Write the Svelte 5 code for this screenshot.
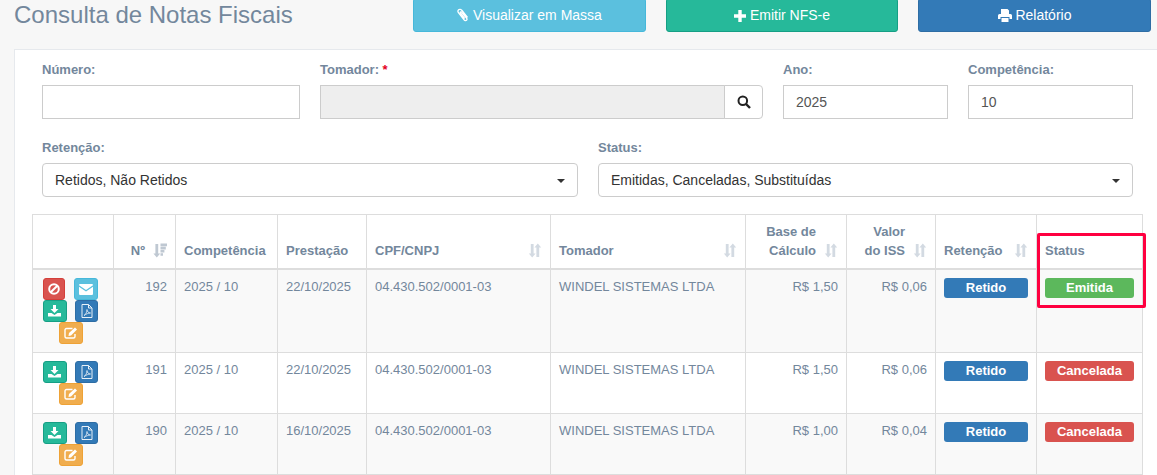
<script>
    let rows = [
        { num: 192, comp: '2025 / 10', prest: '22/10/2025', base: 'R$ 1,50', iss: 'R$ 0,06', status: 'Emitida', open: true },
        { num: 191, comp: '2025 / 10', prest: '22/10/2025', base: 'R$ 1,50', iss: 'R$ 0,06', status: 'Cancelada', open: false },
        { num: 190, comp: '2025 / 10', prest: '16/10/2025', base: 'R$ 1,00', iss: 'R$ 0,04', status: 'Cancelada', open: false }
    ]
</script>

{#snippet sort()}
    <svg class="sort" width="14" height="15" viewBox="0 0 14 15">
        <path d="M2.800 1h2.800v9.500H7.600L4.200 14.500 .8 10.500H2.800z" fill="#d3dae2" />
        <path d="M8.400 14h2.800V4.500h2L9.800 .5 6.400 4.500h2z" fill="#d3dae2" />
    </svg>
{/snippet}

{#snippet download()}
    <svg width="13" height="12" viewBox="0 0 13 12">
        <path d="M5 0h3v4h2.500L6.500 8 2.500 4H5z" fill="#fff" />
        <path d="M0 8h3.500l3 2 3-2H13v3.500H0z" fill="#fff" />
    </svg>
{/snippet}

{#snippet pdf()}
    <svg width="12" height="14" viewBox="0 0 12 14" fill="none" stroke="#e8f0f7" stroke-width="1">
        <path d="M1 .5h6.500L11 4v9.500H1z" />
        <path d="M7.500 .5V4H11" />
        <path d="M3 11.500c2-1 3-4 3-6 0 2 1.500 3.500 3.500 3.500-2 0-4.500 1-6.500 2.500z" stroke-width=".8" />
    </svg>
{/snippet}

{#snippet edit()}
    <svg width="14" height="12" viewBox="0 0 14 12">
        <path d="M8.500 1.500H2.500A1.500 1.500 0 0 0 1 3v6.500A1.500 1.500 0 0 0 2.500 11h7A1.500 1.500 0 0 0 11 9.500V7" fill="none" stroke="#fff" stroke-width="1.400" />
        <path d="M5 6l6-5.500 2 2L7 8.500 4.500 9z" fill="#fff" />
    </svg>
{/snippet}

<div class="page">
    <header class="top">
        <h1>Consulta de Notas Fiscais</h1>
        <div class="actions">
            <button class="btn info">
                <svg width="12" height="14" viewBox="0 0 12 14" fill="none" stroke="#fff" stroke-width="1.300">
                    <path d="M10.500 9.500 5 2.500C4 1.200 2.500 1 1.600 1.800S.8 3.800 1.600 4.800l5.500 7c.7.900 1.800 1 2.400.5s.6-1.500 0-2.300L4.700 4.300c-.4-.5-.9-.6-1.200-.3s-.3.800 0 1.200l4.200 5.300" />
                </svg>
                Visualizar em Massa
            </button>
            <button class="btn green narrow">
                <svg width="12" height="12" viewBox="0 0 12 12"><path d="M4.300 0h3.400v4.300H12v3.400H7.700V12H4.300V7.700H0V4.300h4.300z" fill="#fff" /></svg>
                Emitir NFS-e
            </button>
            <button class="btn blue">
                <svg width="14" height="13" viewBox="0 0 14 13">
                    <path d="M3 0h6.500L11 1.500V5H3z M0 6.500A1.500 1.500 0 0 1 1.500 5h11A1.500 1.500 0 0 1 14 6.500V10h-2.500V8h-9v2H0z M3.500 9h7v4h-7z" fill="#fff" />
                </svg>
                Relatório
            </button>
        </div>
    </header>

    <section class="panel">
        <form class="filters">
            <div class="row first">
                <div class="field">
                    <label for="numero">Número:</label>
                    <input id="numero" type="text" />
                </div>
                <div class="field">
                    <label for="tomador">Tomador: <span class="req">*</span></label>
                    <div class="group">
                        <input id="tomador" type="text" disabled />
                        <button type="button" class="lookup" aria-label="Buscar">
                            <svg width="14" height="14" viewBox="0 0 14 14" fill="none" stroke="#222" stroke-width="2">
                                <circle cx="5.800" cy="5.800" r="4.300" />
                                <path d="M9 9l4 4" stroke-width="2.400" />
                            </svg>
                        </button>
                    </div>
                </div>
                <div class="field">
                    <label for="ano">Ano:</label>
                    <input id="ano" type="text" value="2025" />
                </div>
                <div class="field">
                    <label for="comp">Competência:</label>
                    <input id="comp" type="text" value="10" />
                </div>
            </div>
            <div class="row second">
                <div class="field">
                    <label for="ret">Retenção:</label>
                    <button id="ret" type="button" class="multi">Retidos, Não Retidos<i class="caret"></i></button>
                </div>
                <div class="field">
                    <label for="sta">Status:</label>
                    <button id="sta" type="button" class="multi">Emitidas, Canceladas, Substituídas<i class="caret"></i></button>
                </div>
            </div>
        </form>

        <table>
            <colgroup>
                <col style="width:81px" /><col style="width:62px" /><col style="width:102px" /><col style="width:89px" /><col style="width:184px" />
                <col style="width:195px" /><col style="width:101px" /><col style="width:89px" /><col style="width:101px" /><col style="width:106px" />
            </colgroup>
            <thead>
                <tr>
                    <th></th>
                    <th>
                        <div class="th end">
                            <span>Nº</span>
                            <svg class="sort" width="14" height="15" viewBox="0 0 14 15">
                                <path d="M2.400 1h2.800v9.500h2L3.800 14.500 .4 10.500h2z" fill="#bfc8d2" />
                                <path d="M7.500 .6H14V3.200H7.500z M7.500 3.800H12.800V6.400H7.500z M7.500 7H11.400V9.600H7.500z M7.500 10.200H10V12.800H7.500z" fill="#bfc8d2" />
                            </svg>
                        </div>
                    </th>
                    <th>Competência</th>
                    <th>Prestação</th>
                    <th><div class="th"><span>CPF/CNPJ</span>{@render sort()}</div></th>
                    <th><div class="th"><span>Tomador</span>{@render sort()}</div></th>
                    <th><div class="th end"><span>Base de<br />Cálculo</span>{@render sort()}</div></th>
                    <th><div class="th end"><span>Valor<br />do ISS</span>{@render sort()}</div></th>
                    <th><div class="th"><span>Retenção</span>{@render sort()}</div></th>
                    <th>Status</th>
                </tr>
            </thead>
            <tbody>
                {#each rows as row}
                    <tr>
                        <td class="acts">
                            {#if row.open}
                                <button class="mini red" aria-label="Cancelar">
                                    <svg width="12" height="12" viewBox="0 0 12 12" fill="none" stroke="#fff" stroke-width="2">
                                        <circle cx="6" cy="6" r="4.800" />
                                        <path d="M2.700 9.300l6.600-6.600" />
                                    </svg>
                                </button>
                                <button class="mini info wide" aria-label="Enviar">
                                    <svg width="14" height="11" viewBox="0 0 14 11">
                                        <path d="M1.300 0h11.400c.7 0 1.300.6 1.300 1.200L7 6 0 1.200C0 .6.600 0 1.300 0z" fill="#fff" />
                                        <path d="M0 2.800l7 4.700 7-4.700v6.900c0 .7-.6 1.300-1.300 1.300H1.300C.6 11 0 10.400 0 9.700z" fill="#fff" />
                                    </svg>
                                </button>
                            {/if}
                            <button class="mini green wide" aria-label="Baixar XML">{@render download()}</button>
                            <button class="mini blue" aria-label="Baixar PDF">{@render pdf()}</button>
                            <button class="mini orange wide" aria-label="Editar">{@render edit()}</button>
                        </td>
                        <td class="right">{row.num}</td>
                        <td>{row.comp}</td>
                        <td>{row.prest}</td>
                        <td>04.430.502/0001-03</td>
                        <td>WINDEL SISTEMAS LTDA</td>
                        <td class="right">{row.base}</td>
                        <td class="right">{row.iss}</td>
                        <td><span class="badge retido">Retido</span></td>
                        <td><span class="badge {row.status.toLowerCase()}">{row.status}</span></td>
                    </tr>
                {/each}
            </tbody>
        </table>
    </section>

    <div class="highlight"></div>
</div>

<style>
    :global(body) {
        background: #f7f7f7;
        font-family: "Liberation Sans", Arial, sans-serif;
        font-size: 13px;
        color: #73879c;
    }

    .page {
        position: relative;
        height: 475px;
        overflow: hidden;
        padding-left: 14px;
        box-sizing: border-box;
    }

    .top {
        display: flex;
        justify-content: space-between;
        height: 51px;
        margin-top: -2px;
        padding-right: 6px;
    }

    h1 {
        margin: 0;
        padding-top: 2px;
        font-size: 24px;
        font-weight: 400;
        line-height: 30px;
    }

    .actions {
        display: flex;
        gap: 20px;
    }

    .btn {
        width: 233px;
        height: 34px;
        padding: 0;
        border: 1px solid;
        border-radius: 3px;
        color: #fff;
        font: 14px "Liberation Sans", Arial, sans-serif;
    }

    .btn.narrow {
        width: 232px;
    }

    .btn svg {
        vertical-align: -2px;
    }

    .panel {
        border: 1px solid #e6e9ed;
        border-right: 0;
        background: #fff;
        height: 600px;
    }

    .filters {
        padding: 11px 24px 0 27px;
    }

    .row {
        display: grid;
        column-gap: 20px;
    }

    .first {
        grid-template-columns: 258px 443px 165px 165px;
        margin-bottom: 20px;
    }

    .second {
        grid-template-columns: 536px 535px;
        margin-bottom: 17px;
    }

    label {
        display: block;
        height: 18px;
        margin-bottom: 6px;
        font-weight: 700;
        line-height: 18px;
    }

    .req {
        color: #e3001b;
    }

    input {
        display: block;
        width: 100%;
        height: 34px;
        box-sizing: border-box;
        padding: 6px 12px;
        border: 1px solid #ccc;
        border-radius: 0;
        background: #fff;
        color: #555;
        font: 14px "Liberation Sans", Arial, sans-serif;
    }

    input:disabled {
        background: #eee;
    }

    .group {
        display: flex;
    }

    .lookup {
        flex: 0 0 39px;
        height: 34px;
        margin-left: -1px;
        padding: 2px 0 0;
        border: 1px solid #ccc;
        border-radius: 0 4px 4px 0;
        background: #fff;
    }

    .multi {
        position: relative;
        display: block;
        width: 100%;
        height: 34px;
        padding: 0 12px;
        border: 1px solid #ccc;
        border-radius: 4px;
        background: #fff;
        color: #333;
        font: 14px "Liberation Sans", Arial, sans-serif;
        text-align: left;
    }

    .caret {
        position: absolute;
        top: 15px;
        right: 12px;
        border-top: 4px solid #333;
        border-right: 4px solid transparent;
        border-left: 4px solid transparent;
    }

    table {
        width: 1110px;
        margin-left: 17px;
        border-collapse: collapse;
        table-layout: fixed;
    }

    th, td {
        padding: 8px;
        border: 1px solid #ddd;
        line-height: 18.500px;
        text-align: left;
    }

    th {
        border-bottom: 2px solid #ddd;
        font-weight: 700;
        vertical-align: bottom;
        white-space: nowrap;
    }

    td {
        vertical-align: top;
    }

    tbody tr:nth-child(odd) {
        background: #f9f9f9;
    }

    .th {
        display: flex;
        align-items: flex-end;
        justify-content: space-between;
    }

    .th.end {
        justify-content: flex-end;
        gap: 8px;
        text-align: right;
    }

    .sort {
        flex: none;
        margin-bottom: 2px;
    }

    .right {
        text-align: right;
    }

    .acts {
        line-height: 22px;
        text-align: center;
    }

    .mini {
        display: inline-flex;
        align-items: center;
        justify-content: center;
        box-sizing: border-box;
        width: 23px;
        height: 22px;
        margin-right: 5px;
        padding: 0;
        border: 1px solid;
        border-radius: 3px;
        vertical-align: top;
    }

    .mini.red {
        width: 22px;
    }

    .mini.wide {
        width: 24px;
    }

    .info { background: #5bc0de; border-color: #46b8da; }
    .green { background: #26b99a; border-color: #169f85; }
    .blue { background: #337ab7; border-color: #2e6da4; }
    .red { background: #d9534f; border-color: #d43f3a; }
    .orange { background: #f0ad4e; border-color: #eea236; }

    .badge {
        display: block;
        height: 20px;
        border-radius: 3px;
        color: #fff;
        font-weight: 700;
        line-height: 20px;
        text-align: center;
    }

    .retido { background: #337ab7; }
    .emitida { background: #5cb85c; }
    .cancelada { background: #d9534f; }

    .highlight {
        position: absolute;
        top: 233px;
        left: 1037px;
        width: 109px;
        height: 75px;
        box-sizing: border-box;
        border: 3px solid #ff0040;
        border-radius: 2px;
    }
</style>
